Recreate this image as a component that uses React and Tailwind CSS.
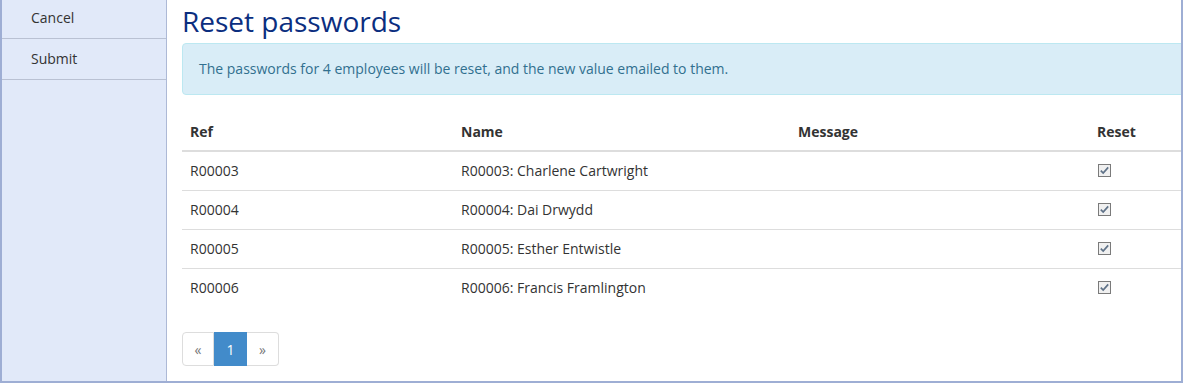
import React from "react";

const rows = [
  ["R00003", "R00003: Charlene Cartwright"],
  ["R00004", "R00004: Dai Drwydd"],
  ["R00005", "R00005: Esther Entwistle"],
  ["R00006", "R00006: Francis Framlington"],
];

function Check() {
  return (
    <svg width="13" height="13" viewBox="0 0 13 13" className="block">
      <rect x="0.5" y="0.5" width="12" height="12" fill="#f0f0f0" stroke="#7a7a7a" />
      <path d="M2.8 6.6 L5.2 9 L10.2 3.4" fill="none" stroke="#5f7288" strokeWidth="1.7" />
    </svg>
  );
}

export default function App() {
  return (
    <div
      className="w-[1183px] h-[383px] flex border-l-2 border-r-2 border-b-2 border-[#9eaed4] bg-white overflow-hidden text-[14px] text-[#333]"
      style={{ fontFamily: '"Open Sans", sans-serif' }}
    >
      <div className="w-[165px] shrink-0 bg-[#e1e9f9] border-r border-[#adb9d6] flex flex-col">
        <div className="h-[39px] border-b border-[#b9c1d3] pl-[29px] pt-[8px] leading-[20px]">Cancel</div>
        <div className="h-[41px] border-b border-[#b9c1d3] pl-[29px] pt-[10px] leading-[20px]">Submit</div>
      </div>
      <div className="flex-1 overflow-hidden pl-[15px]">
        <div className="w-[1030px]">
          <h1 className="text-[28px] leading-[31px] text-[#0b2e7f] font-normal mt-[6px] mb-[6px]">Reset passwords</h1>
          <div className="h-[52px] border border-[#bce8f1] bg-[#d9edf7] text-[#31708f] rounded-[4px] px-[16px] flex items-center leading-[20px]">
            The passwords for 4 employees will be reset, and the new value emailed to them.
          </div>
          <div className="mt-[18px]">
            <div className="flex h-[39px] items-center font-bold border-b-2 border-[#dddddd]">
              <div className="w-[271px] pl-[8px]">Ref</div>
              <div className="w-[337px] pl-[8px]">Name</div>
              <div className="w-[299px] pl-[8px]">Message</div>
              <div className="pl-[8px]">Reset</div>
            </div>
            {rows.map((r, i) => (
              <div
                key={r[0]}
                className={i > 0 ? "flex h-[39px] items-center pb-[2px] border-t border-[#dddddd]" : "flex h-[38px] items-center pb-[2px]"}
              >
                <div className="w-[271px] pl-[8px]">{r[0]}</div>
                <div className="w-[337px] pl-[8px]">{r[1]}</div>
                <div className="w-[299px] pl-[8px]"></div>
                <div className="pl-[9px]"><Check /></div>
              </div>
            ))}
          </div>
          <div className="mt-[25px] flex">
            <div className="w-[32px] h-[34px] border border-[#dddddd] rounded-l-[4px] flex items-center justify-center text-[#777]">«</div>
            <div className="w-[33px] h-[34px] bg-[#428bca] border border-[#428bca] flex items-center justify-center text-white">1</div>
            <div className="w-[32px] h-[34px] border border-l-0 border-[#dddddd] rounded-r-[4px] flex items-center justify-center text-[#777]">»</div>
          </div>
        </div>
      </div>
    </div>
  );
}
